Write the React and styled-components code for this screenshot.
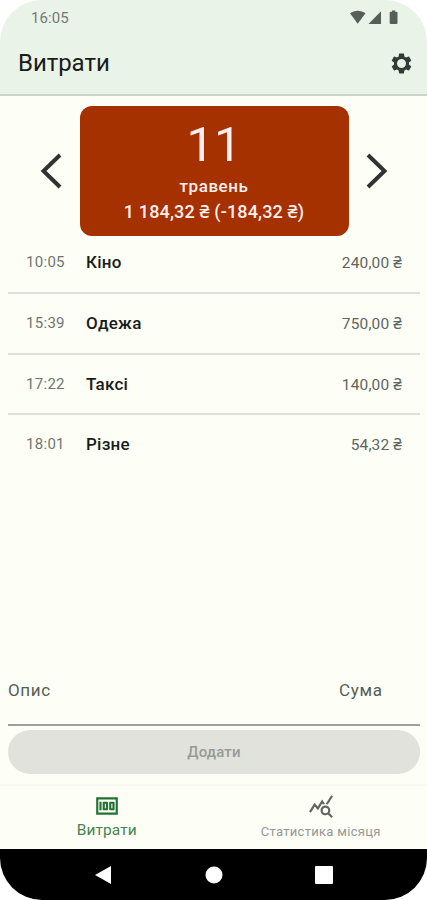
import React from "react";
import styled, { createGlobalStyle } from "styled-components";
import { MdMoney, MdQueryStats } from "react-icons/md";

const Global = createGlobalStyle`
  * { box-sizing: border-box; }
  body { margin: 0; background: #fff; }
  button { border: 0; padding: 0; background: none; font: inherit; color: inherit; }
`;

const Phone = styled.div`
  width: 427px;
  height: 900px;
  display: flex;
  flex-direction: column;
  overflow: hidden;
  border-radius: 42px;
  background: #fdfef6;
  color: #191c1a;
  font-family: Roboto, "Noto Sans", sans-serif;
`;

const Header = styled.header`
  height: 96px;
  flex: none;
  background: #e9f3e8;
  border-bottom: 2px solid #cbd3ca;
`;

const StatusBar = styled.div`
  height: 36px;
  display: flex;
  align-items: center;
  justify-content: space-between;
  padding: 0 28px 0 31px;
  color: #737a73;
  font-size: 15px;
  letter-spacing: 0.1px;
`;

const TitleBar = styled.div`
  height: 54px;
  display: flex;
  align-items: center;
  justify-content: space-between;
  padding: 0 13px 0 18px;
`;

const Title = styled.h1`
  margin: 0;
  font-size: 24px;
  line-height: 28px;
  font-weight: 400;
  letter-spacing: -0.05px;
`;

const Icon = styled.svg`
  display: block;
  flex: none;
`;

const DayPicker = styled.section`
  flex: none;
  height: 130px;
  margin-top: 10px;
  display: flex;
  justify-content: space-between;
  align-items: center;
  padding: 0 39px 0 40px;
`;

const DayCard = styled.div`
  width: 269px;
  height: 130px;
  border-radius: 12px;
  background: #a53000;
  color: #ffeef0;
  text-align: center;
  padding-top: 11px;
  font-weight: 500;
`;

const DayNumber = styled.div`
  font-size: 49px;
  line-height: 56px;
  font-weight: 400;
`;

const DayLine = styled.div`
  font-size: ${(p) => p.$size}px;
  line-height: 26px;
  letter-spacing: ${(p) => p.$spacing}px;
`;

const List = styled.ul`
  flex: 1;
  margin: 0;
  padding: 0 7px 0 8px;
  list-style: none;
`;

const Row = styled.li`
  height: ${(p) => (p.$last ? 58 : 60.5)}px;
  display: grid;
  grid-template-columns: 60px 1fr auto;
  align-items: center;
  padding: 0 18px;
  border-bottom: ${(p) => (p.$last ? "0" : "2px solid #dfe0dc")};

  &:first-child { height: 58px; padding-bottom: 5px; }
`;

const Time = styled.span`
  font-size: 15px;
  letter-spacing: 0.3px;
  color: #707571;
`;

const Name = styled.span`
  font-size: 17px;
  font-weight: 500;
  letter-spacing: 0.25px;
`;

const Amount = styled.span`
  font-size: 15.5px;
  letter-spacing: 0.15px;
  color: #60655f;
`;

const EntryForm = styled.form`
  flex: none;
  padding: 0 7px 0 8px;
`;

const Fields = styled.div`
  height: 56px;
  display: grid;
  grid-template-columns: 331px 1fr;
  padding-top: 9px;
  border-bottom: 2px solid #9ca09a;
  color: #555d56;
  font-size: 17px;
  line-height: 22px;
  letter-spacing: 0.65px;
`;

const AddButton = styled.button`
  display: block;
  width: 100%;
  height: 44px;
  margin-top: 4px;
  border-radius: 22px;
  background: #e1e2dc;
  color: #979b95;
  font-size: 15px;
  font-weight: 500;
  letter-spacing: 0.15px;
`;

const Tabs = styled.nav`
  flex: none;
  height: 65px;
  margin-top: 10px;
  border-top: 2px solid #f7f8f1;
  display: grid;
  grid-template-columns: 1fr 1fr;
`;

const Tab = styled.button`
  display: flex;
  flex-direction: column;
  align-items: center;
  padding-top: 7px;
  padding-left: ${(p) => (p.$active ? 0 : 1)}px;
  color: ${(p) => (p.$active ? "#217333" : "#606660")};
  svg { flex: none; display: block; }
`;

const TabLabel = styled.span`
  margin-top: ${(p) => (p.$active ? 0 : 2)}px;
  font-size: ${(p) => (p.$active ? 15.5 : 13)}px;
  line-height: 22px;
  letter-spacing: ${(p) => (p.$active ? 0.1 : 0.3)}px;
  color: ${(p) => (p.$active ? "#49834f" : "#949894")};
`;

const SystemBar = styled.footer`
  flex: none;
  height: 51px;
  background: #000;
  display: flex;
  align-items: center;
  justify-content: space-between;
  padding: 0 94px;
`;

const expenses = [
  { time: "10:05", name: "Кіно", amount: "240,00 ₴" },
  { time: "15:39", name: "Одежа", amount: "750,00 ₴" },
  { time: "17:22", name: "Таксі", amount: "140,00 ₴" },
  { time: "18:01", name: "Різне", amount: "54,32 ₴" },
];

const StatusIcons = () => (
  <Icon width="49" height="16" viewBox="0 0 49 16" fill="#565e57">
    <path d="M0 3.200C4.500 -0.200 11 -0.200 15.500 3.200L7.700 13.800Z" />
    <path d="M31 1.200v12.800H18.500Z" />
    <path d="M42 0.500h3.200v1.300h1.300q1 0 1 1V13q0 1-1 1h-5.800q-1 0-1-1V2.800q0-1 1-1H42Z" />
  </Icon>
);

const Gear = () => (
  <Icon width="25" height="25" viewBox="0 0 24 24" fill="#343a35" fillRule="evenodd">
    <path d="M19.140 12.940c.040-.300.060-.610.060-.940 0-.320-.020-.640-.070-.940l2.030-1.580c.180-.140.230-.410.120-.610l-1.920-3.320c-.120-.220-.370-.290-.590-.220l-2.390.960c-.500-.380-1.030-.700-1.620-.940L14.400 2.810c-.040-.240-.240-.410-.480-.410h-3.840c-.240 0-.430.170-.470.410L9.250 5.350c-.590.240-1.130.570-1.620.940L5.240 5.330c-.220-.080-.470 0-.590.220L2.740 8.870c-.120.210-.080.470.120.610l2.030 1.580c-.050.300-.090.630-.090.940s.020.640.070.940l-2.030 1.580c-.180.140-.230.410-.120.610l1.920 3.320c.120.220.370.290.590.220l2.390-.960c.500.380 1.030.700 1.620.940l.360 2.540c.050.240.240.410.480.410h3.840c.240 0 .440-.170.470-.410l.360-2.540c.590-.240 1.130-.560 1.620-.940l2.390.960c.220.080.470 0 .590-.220l1.920-3.320c.120-.220.070-.470-.120-.610zM12 16.300a4.300 4.300 0 1 1 0-8.600a4.300 4.300 0 0 1 0 8.600z" />
  </Icon>
);

const Chevron = ({ next }) => (
  <Icon width="22" height="36" viewBox="0 0 22 36" fill="none" stroke="#2f3431" strokeWidth="4">
    <path d={next ? "M2 2L18.500 18L2 34" : "M20 2L3.500 18L20 34"} />
  </Icon>
);

export default function App() {
  return (
    <>
      <Global />
      <Phone>
        <Header>
          <StatusBar>
            <span>16:05</span>
            <StatusIcons />
          </StatusBar>
          <TitleBar>
            <Title>Витрати</Title>
            <button type="button"><Gear /></button>
          </TitleBar>
        </Header>
        <DayPicker>
          <button type="button"><Chevron /></button>
          <DayCard>
            <DayNumber>11</DayNumber>
            <DayLine $size={17} $spacing={0.55}>травень</DayLine>
            <DayLine $size={18} $spacing={0.15}>1 184,32 ₴ (-184,32 ₴)</DayLine>
          </DayCard>
          <button type="button"><Chevron next /></button>
        </DayPicker>
        <List>
          {expenses.map((e, i) => (
            <Row key={e.time} $last={i === expenses.length - 1}>
              <Time>{e.time}</Time>
              <Name>{e.name}</Name>
              <Amount>{e.amount}</Amount>
            </Row>
          ))}
        </List>
        <EntryForm>
          <Fields>
            <span>Опис</span>
            <span>Сума</span>
          </Fields>
          <AddButton type="button">Додати</AddButton>
        </EntryForm>
        <Tabs>
          <Tab type="button" $active>
            <MdMoney size={26} />
            <TabLabel $active>Витрати</TabLabel>
          </Tab>
          <Tab type="button">
            <MdQueryStats size={26} />
            <TabLabel>Статистика місяця</TabLabel>
          </Tab>
        </Tabs>
        <SystemBar>
          <Icon width="18" height="20" viewBox="0 0 18 20" fill="#fff"><path d="M17 1v18L1 10Z" /></Icon>
          <Icon width="18" height="18" viewBox="0 0 18 18" fill="#fff"><circle cx="9" cy="9" r="8.500" /></Icon>
          <Icon width="18" height="18" viewBox="0 0 18 18" fill="#fff"><rect width="18" height="18" rx="1" /></Icon>
        </SystemBar>
      </Phone>
    </>
  );
}
